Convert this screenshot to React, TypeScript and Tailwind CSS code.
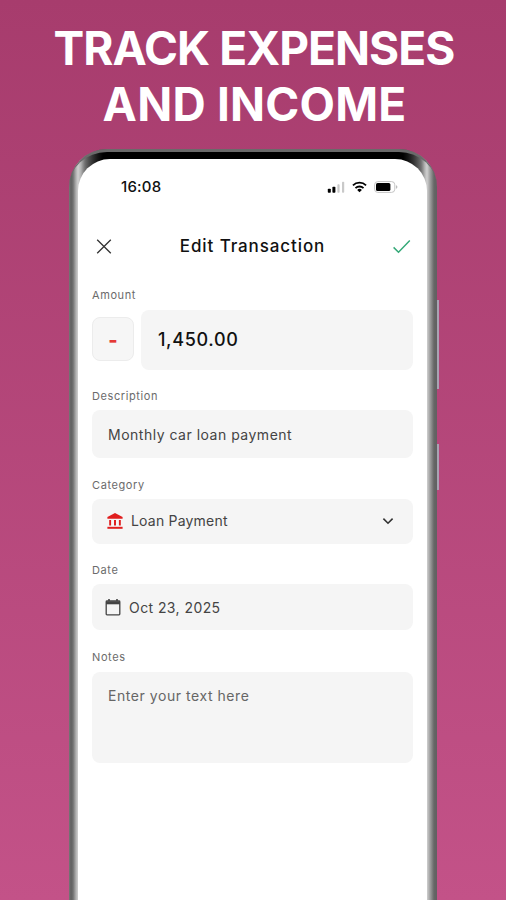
import type { ReactNode } from 'react';

function Label({ children }: { children: ReactNode }) {
  return <div className="h-4 text-[11px] leading-4 tracking-[0.6px] text-[#6b6b6b]">{children}</div>;
}

function StatusIcons() {
  return (
    <div className="flex items-center">
      {/* Signal */}
      <svg className="w-[18px] h-3" viewBox="0 0 18 12">
        <rect x="0.8" y="7.8" width="3" height="4" rx="0.8" fill="#000" />
        <rect x="5.4" y="5.8" width="3" height="6" rx="0.8" fill="#000" />
        <rect x="10.4" y="3.2" width="2.2" height="8.6" rx="0.8" fill="#c9c9c9" />
        <rect x="15" y="0.8" width="2.2" height="11" rx="0.8" fill="#c9c9c9" />
      </svg>
      {/* Wifi */}
      <svg className="w-[15px] h-3 ml-[7px]" viewBox="0 0 16 12" fill="none" stroke="#000" strokeWidth="1.9">
        <path d="M1 4.3a10 10 0 0 1 14 0" />
        <path d="M3.7 7.2a6.2 6.2 0 0 1 8.6 0" />
        <path d="M8 11.6 5.5 9.2a3.6 3.6 0 0 1 5 0z" fill="#000" stroke="none" />
      </svg>
      {/* Battery */}
      <svg className="w-6 h-3 ml-[7px]" viewBox="0 0 24 12">
        <rect x="0.6" y="0.6" width="20.2" height="10.8" rx="3.2" fill="none" stroke="#c4c4c4" />
        <rect x="2" y="2" width="14.4" height="8" rx="1.6" fill="#000" />
        <path d="M22 4.2v3.6c.9-.4 1.4-1 1.4-1.8s-.5-1.4-1.4-1.8z" fill="#bbb" />
      </svg>
    </div>
  );
}

function EditTransaction() {
  return (
    <div className="px-[14px]">
      {/* Header */}
      <div className="flex items-center justify-between h-6 mt-[37px] pl-1 pr-[2px]">
        <svg className="w-4 h-4" viewBox="0 0 16 16" fill="none" stroke="#333" strokeWidth="1.3">
          <path d="M1.2 1.7l13.6 13.6M14.8 1.7 1.2 15.3" />
        </svg>
        <h2 className="text-[17px] font-medium leading-6 tracking-[0.9px] text-[#111]">Edit Transaction</h2>
        <svg className="w-[18px] h-4" viewBox="0 0 18 16" fill="none" stroke="#35a978" strokeWidth="1.5">
          <path d="M.6 9.4l4.9 4.8L16.8 2.6" />
        </svg>
      </div>

      {/* Amount */}
      <div className="mt-[29px]">
        <Label>Amount</Label>
        <div className="flex items-start mt-[7px]">
          <div className="flex items-center justify-center w-[42px] h-[44px] mt-[7px] rounded-lg border border-[#ececec] bg-[#f6f6f6]">
            <span className="pt-0.5 text-[20px] font-extrabold leading-none text-[#e53935]">-</span>
          </div>
          <div className="flex items-center flex-1 h-[60px] ml-[7px] pl-[17px] pb-px rounded-lg bg-[#f5f5f5] text-[18px] font-medium tracking-[0.65px] text-[#111]">
            1,450.00
          </div>
        </div>
      </div>

      {/* Description */}
      <div className="mt-[18px]">
        <Label>Description</Label>
        <div className="flex items-center h-12 mt-[6px] px-4 rounded-lg bg-[#f5f5f5] text-[14px] tracking-[0.5px] text-[#444]">
          Monthly car loan payment
        </div>
      </div>

      {/* Category */}
      <div className="mt-[19px]">
        <Label>Category</Label>
        <div className="flex items-center h-[45px] mt-[6px] pl-[14px] pr-[19px] pb-[2px] rounded-lg bg-[#f5f5f5] text-[14px] tracking-[0.2px] text-[#444]">
          <svg className="w-[18px] h-[18px] mr-[7px]" viewBox="0 0 18 18" fill="#e01e1e">
            <path d="M9 1 16.6 5v1.8H1.4V5z" />
            <path d="M3.2 8h1.9v5.4H3.2zM8 8h2v5.4H8zM12.9 8h1.9v5.4h-1.9z" />
            <path d="M1.4 14.8h15.2v2H1.4z" />
          </svg>
          <span>Loan Payment</span>
          <svg className="w-3 h-3 ml-auto" viewBox="0 0 12 12" fill="none" stroke="#333" strokeWidth="1.6">
            <path d="M1.4 3.6 6 8.2l4.6-4.6" />
          </svg>
        </div>
      </div>

      {/* Date */}
      <div className="mt-[18px]">
        <Label>Date</Label>
        <div className="flex items-center h-[46px] mt-[6px] px-[13px] rounded-lg bg-[#f5f5f5] text-[14px] tracking-[0.42px] text-[#444]">
          <svg className="w-4 h-[18px] mr-2" viewBox="0 0 16 18" fill="none" stroke="#444" strokeWidth="1.3">
            <rect x="1.2" y="3" width="13.6" height="13.8" rx="0.8" />
            <path d="M1 4.8h14" strokeWidth="3" />
            <path d="M4 1v2M12 1v2" strokeWidth="1.6" />
          </svg>
          Oct 23, 2025
        </div>
      </div>

      {/* Notes */}
      <div className="mt-[19px]">
        <Label>Notes</Label>
        <div className="h-[91px] mt-[7px] px-4 pt-[14px] rounded-lg bg-[#f5f5f5] text-[14px] leading-5 tracking-[0.55px] text-[#666]">
          Enter your text here
        </div>
      </div>
    </div>
  );
}

export default function App() {
  return (
    <div className="w-[506px] h-[900px] overflow-hidden bg-gradient-to-b from-[#a73c6d] to-[#c35288] font-['Inter',sans-serif]">
      <h1 className="h-[149px] pt-5 text-center text-[46px] font-bold leading-[56px] whitespace-nowrap text-white">
        <span className="block pl-0.5 tracking-[-0.95px]">TRACK EXPENSES</span>
        <span className="block pl-[3px] tracking-[0.2px]">AND INCOME</span>
      </h1>

      {/* Phone */}
      <div className="relative w-[368px] h-[760px] ml-[69px] pt-[3px] rounded-t-[38px] bg-[linear-gradient(90deg,#777_0px,#606060_2px,#707070_4px,#b0b0b0_7px,#d0d0d0_9px,#888_16px,#555_30px,#555_338px,#888_352px,#d0d0d0_358px,#a0a0a0_361px,#666_365px,#606060_368px)]">
        <div className="absolute inset-x-0 top-0 h-[60px] rounded-t-[38px] border-t-[3px] border-[#6a6a6a] bg-[linear-gradient(90deg,transparent_12px,#000_34px,#000_334px,transparent_356px)]" />
        <div className="absolute -right-[2px] top-[151px] w-[2px] h-[89px] bg-[#a9a3b3]" />
        <div className="absolute -right-[2px] top-[295px] w-[2px] h-[46px] bg-[#a9a3b3]" />
        <div className="relative h-full mt-[7px] ml-[9px] mr-[10px] rounded-t-[32px] bg-white">
          <div className="flex items-center justify-between pt-[17px] pl-[43px] pr-[29px]">
            <span className="pt-px text-[15px] font-medium leading-5 tracking-[0.2px] text-[#111]">16:08</span>
            <StatusIcons />
          </div>
          <EditTransaction />
        </div>
      </div>
    </div>
  );
}
